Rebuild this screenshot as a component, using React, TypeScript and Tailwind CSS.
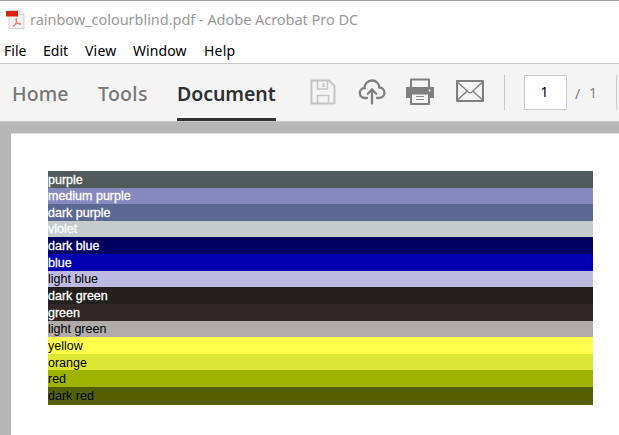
const rows = [
  { label: 'purple', style: 'h-[17px] leading-[18px] bg-[#505a5a] text-white', heavy: true },
  { label: 'medium purple', style: 'h-4 leading-4 bg-[#8689bd] text-white', heavy: true },
  { label: 'dark purple', style: 'h-[17px] leading-[18px] bg-[#5c6894] text-white', heavy: true },
  { label: 'violet', style: 'h-4 leading-4 bg-[#c5cdcc] text-white', heavy: true },
  { label: 'dark blue', style: 'h-[17px] leading-[18px] bg-[#000060] text-white', heavy: true },
  { label: 'blue', style: 'h-[17px] leading-[18px] bg-[#0000b2] text-white', heavy: true },
  { label: 'light blue', style: 'h-4 leading-4 bg-[#bdb9e0] text-black', heavy: false },
  { label: 'dark green', style: 'h-[17px] leading-[18px] bg-[#231f1e] text-white', heavy: true },
  { label: 'green', style: 'h-[17px] leading-[18px] bg-[#312726] text-white', heavy: true },
  { label: 'light green', style: 'h-4 leading-4 bg-[#b1abab] text-black', heavy: false },
  { label: 'yellow', style: 'h-[17px] leading-[18px] bg-[#ffff4c] text-black', heavy: false },
  { label: 'orange', style: 'h-4 leading-[18px] bg-[#dde633] text-black', heavy: false },
  { label: 'red', style: 'h-[17px] leading-[18px] bg-[#9eb200] text-black', heavy: false },
  { label: 'dark red', style: 'h-[18px] leading-[18px] bg-[#546000] text-black', heavy: false },
];

function PdfIcon() {
  return (
    <svg className="ml-[5px] h-5 w-5 shrink-0" viewBox="0 0 20 20" fill="none">
      <path d="M4 .5h11l4 4v14H4z" fill="#f3f3f3" stroke="#cfcfcf" />
      <path d="M15 .5v4h4" fill="#fff" stroke="#cfcfcf" />
      <path d="M1 1h12v5.500H1z" fill="#df2010" />
      <path d="M11.200 8.500c-.8 0-.2 2 .4 3.200 1 2 2.700 2.900 3.900 2.800 1.100-.1.600-1.200-.8-1.200-1.700 0-4 .6-5.300 1.500-1.200.8-1.300 1.700-.7 1.600 1-.2 2.200-3.200 2.600-4.800.400-1.500.5-3.100-.1-3.100z" stroke="#e8605a" strokeWidth=".9" />
    </svg>
  );
}

function SaveIcon() {
  return (
    <svg className="mb-px h-[26px] w-[26px]" viewBox="0 0 26 26" fill="none" stroke="#c4c4c4">
      <path d="M1.500 1.500h17.500l5.500 5.500v17.500h-23z" strokeWidth="2" strokeLinejoin="round" />
      <path d="M7.500 2v8h10V2M7.500 24v-7.500h11V24" strokeWidth="1.500" />
      <path d="M13.500 4v4" strokeWidth="2" />
    </svg>
  );
}

function CloudIcon() {
  return (
    <svg className="h-[26px] w-7" viewBox="0 0 28 26" fill="none" stroke="#7f7f7f" strokeWidth="2.300">
      <path d="M9 19H7A5 5 0 0 1 6.700 9C6.400 5 9.500 1.500 14 1.500c4.200 0 7.300 3 7.300 7a5.400 5.400 0 0 1 5.200 5.300c0 3-2.500 5.200-5.500 5.200h-2" strokeLinecap="round" />
      <path d="M14 24.500V10.500M9.800 14.700 14 10.500l4.200 4.200" strokeLinecap="round" />
    </svg>
  );
}

function PrintIcon() {
  return (
    <svg className="h-[27px] w-7" viewBox="0 0 28 27">
      <path d="M5 9V1.500h18V9" fill="#f4f4f4" stroke="#7f7f7f" strokeWidth="2" strokeLinejoin="round" />
      <path d="M1 9h26q1 0 1 1v9q0 1-1 1H1q-1 0-1-1v-9q0-1 1-1z" fill="#7f7f7f" />
      <path d="M5 15.500h18V26H5z" fill="#f4f4f4" stroke="#7f7f7f" strokeWidth="2" strokeLinejoin="round" />
      <path d="M10 18.500h8M10 21.500h8" stroke="#8a8a8a" strokeWidth="1" />
      <circle cx="23.500" cy="12.500" r="1" fill="#e7e7e7" />
    </svg>
  );
}

function MailIcon() {
  return (
    <svg className="h-[22px] w-7" viewBox="0 0 28 22" fill="none" stroke="#7f7f7f">
      <rect x="1" y="1" width="26" height="20" rx=".5" strokeWidth="2.200" />
      <path d="m2 2.500 10.500 9.800q1.500 1.200 3 0L26 2.500M2 19.500l9-8.300M26 19.500l-9-8.300" strokeWidth="1.300" />
    </svg>
  );
}

export default function App() {
  return (
    <main className="flex h-[435px] w-[619px] flex-col overflow-hidden border-t border-[#a1a1a1] bg-white font-['Noto_Sans','Open_Sans',sans-serif]">
      <header className="flex h-[37px] shrink-0 items-center">
        <PdfIcon />
        <span className="ml-[5px] whitespace-nowrap text-[14.5px] tracking-[-0.03px] text-[#999999]">rainbow_colourblind.pdf - Adobe Acrobat Pro DC</span>
      </header>
      <nav className="flex h-[25px] shrink-0 items-center pl-1 text-[14px] text-black">
        <span className="w-[39px]">File</span>
        <span className="w-[42px]">Edit</span>
        <span className="w-12 tracking-[0.2px]">View</span>
        <span className="w-[71px] tracking-[0.1px]">Window</span>
        <span className="tracking-[0.2px]">Help</span>
      </nav>
      <section className="flex h-[59px] shrink-0 overflow-hidden border-y border-[#c9c9c9] bg-[#f4f4f4]">
        <div className="flex shrink-0 pl-3 text-[19.5px] leading-[60px] text-[#777777]">
          <span className="w-[86px] font-medium tracking-[0.1px]">Home</span>
          <span className="w-[79px] font-medium tracking-[0.3px]">Tools</span>
          <span className="w-[99px] border-b-[3px] border-[#333333] font-semibold tracking-[-0.05px] text-[#303030]">Document</span>
        </div>
        <div className="flex shrink-0 items-center pl-[34px]">
          <SaveIcon />
          <span className="mb-px ml-[22px]"><CloudIcon /></span>
          <span className="mb-[2px] ml-5"><PrintIcon /></span>
          <span className="mb-[3px] ml-[22px]"><MailIcon /></span>
        </div>
        <div className="ml-5 mt-[11px] h-[35px] w-px shrink-0 bg-[#c9c9c9]" />
        <div className="ml-[19px] mt-[11px] flex h-[35px] w-[43px] shrink-0 items-center justify-center border border-[#c9c9c9] bg-white pb-[2px] pr-[2px] text-[14px] text-black">1</div>
        <span className="ml-2 mt-[19px] w-[14px] shrink-0 text-[14px] text-[#777777]">/</span>
        <span className="mt-[18px] w-[17px] shrink-0 text-[14px] text-[#858585]">1</span>
        <div className="ml-[10px] mt-[11px] h-[35px] w-px shrink-0 bg-[#c9c9c9]" />
      </section>
      <section className="flex min-h-0 flex-1 bg-[#b6b6b6] pl-[11px] pt-[11px]">
        <div className="flex-1 border-t border-[#dedede] bg-white pl-[37px] pt-[37px] font-['Liberation_Sans',Arial,sans-serif] text-[12.5px]">
          <div className="w-[545px]">
            {rows.map(({ label, style, heavy }) => (
              <div key={label} className={`${style} whitespace-nowrap`}>
                <span className={heavy ? '[-webkit-text-stroke:0.3px_white]' : ''}>{label}</span>
              </div>
            ))}
          </div>
        </div>
      </section>
    </main>
  );
}
